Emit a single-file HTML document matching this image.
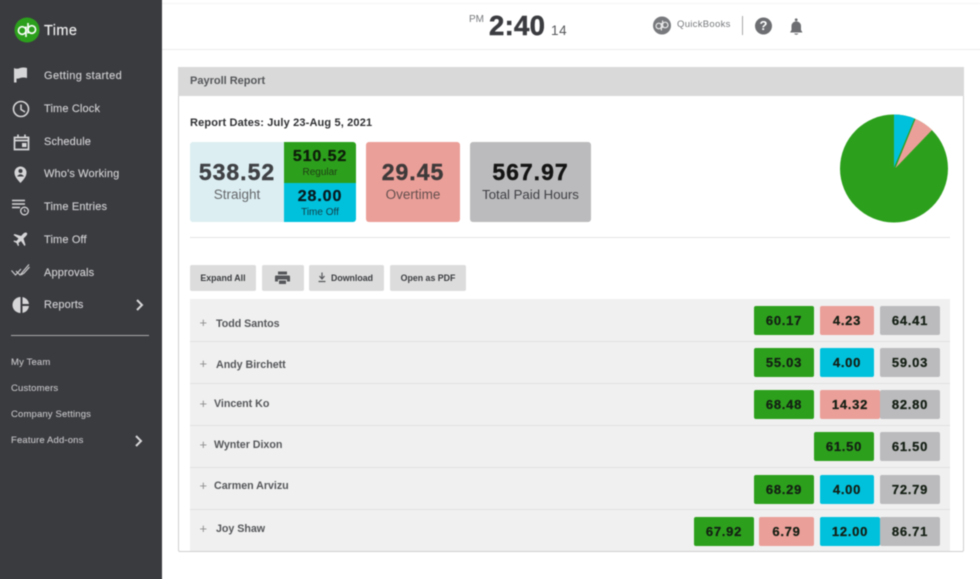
<!DOCTYPE html>
<html><head><meta charset="utf-8"><style>
html,body{margin:0;padding:0;background:#fff}
#o{position:relative;width:980px;height:579px;overflow:hidden;background:#fff}
#r{position:relative;width:980px;height:579px;background:#fff;font-family:"Liberation Sans",sans-serif;filter:blur(.45px)}
#r div{position:absolute;white-space:nowrap}
.sb{left:-6px;top:-6px;width:168px;height:591px;background:#3a3b3f}
.n{left:44px;font-size:11px;color:#cfcfd1;letter-spacing:.15px;line-height:14px;-webkit-text-stroke:.15px #cfcfd1}
.m{left:11px;font-size:9.5px;color:#c4c4c6;letter-spacing:.15px;line-height:12px;-webkit-text-stroke:.1px #c4c4c6}
.b{height:29px;line-height:29px;text-align:center;font-size:13px;font-weight:bold;border-radius:2px;color:#141f14;letter-spacing:.75px;-webkit-text-stroke:.25px #141f14}
.g{background:#2ca01c}.p{background:#eb9f99}.c{background:#00c1dc}.y{background:#bbbbbd}
.row{left:190px;width:760px;background:#f0f0f0;border-bottom:1px solid #e0e0e0;box-sizing:border-box}
.nm{font-size:10.7px;font-weight:bold;color:#55575a;letter-spacing:-.03px;line-height:14px}
.pl{font-size:13px;color:#8f8f8f;line-height:14px;left:199.5px}
.btn{top:265px;height:26px;line-height:26px;background:#dcdcdc;border-radius:2px;text-align:center;font-size:8.8px;font-weight:bold;color:#3b3d40}
.big{font-size:23px;font-weight:bold;line-height:27px;letter-spacing:1px;text-align:center}
</style></head><body><div id="o"><div id="r">
<div class="sb"></div>
<svg style="position:absolute;left:0;top:0" width="162" height="330" fill="none">
<circle cx="27" cy="30" r="12.5" fill="#2ca01c"/>
<circle cx="22.2" cy="30.500" r="3.800" stroke="#fff" stroke-width="1.600"/><path d="M26 26.500V37" stroke="#fff" stroke-width="1.600"/>
<circle cx="31.800" cy="29.500" r="3.800" stroke="#fff" stroke-width="1.600"/><path d="M28 23V33.500" stroke="#fff" stroke-width="1.600"/>
<path d="M14 68Q17 69.500 20 68Q23.500 67 27 68V78Q23.500 77 20 78Q18 79 16.500 78.500V82.500H14Z" fill="#d6d6d8"/>
<circle cx="21" cy="109" r="7.500" stroke="#d6d6d8" stroke-width="1.600"/><path d="M21 104.500V109.500L25 112" stroke="#d6d6d8" stroke-width="1.500"/>
<path d="M14.500 137.500H28.500V149.500H14.500ZM14.500 140.500H28.500" stroke="#d6d6d8" stroke-width="1.700"/><path d="M18 134.500V138M25 134.500V138" stroke="#d6d6d8" stroke-width="1.600"/><rect x="22" y="143" width="4.500" height="4" fill="#d6d6d8"/>
<path d="M20.500 183C17 179 14.500 176.500 14.500 172.500A6 6 0 0 1 26.500 172.500C26.500 176.500 24 179 20.500 183Z" fill="#d6d6d8"/><circle cx="20.500" cy="171" r="2" fill="#3a3b3f"/><path d="M17 176.500Q20.500 172 24 176.500Z" fill="#3a3b3f"/>
<path d="M12 200.500H25M12 204H25M12 207.500H20" stroke="#d6d6d8" stroke-width="1.500"/><circle cx="24.500" cy="211" r="3.800" stroke="#d6d6d8" stroke-width="1.300"/><path d="M24.500 209V211.200H26" stroke="#d6d6d8" stroke-width=".8"/>
<path d="M27 233C26 232 24.500 232.500 23.500 233.500L21 236L14.500 234L13.500 235L18.500 238.500L16.500 241L14 240.500L13.500 241.500L16.500 243L18 246L19 245.500L18.500 243L21 241L24.500 246L25.500 245L23.500 238.500L26 236C27 235 27.500 234 27 233Z" fill="#d6d6d8"/>
<path d="M11.500 270.500L15.500 275L21 269M16 271L20 275L29 264.500M21 275L24 273L29.500 267" stroke="#c9c9cb" stroke-width="1.200"/>
<path d="M20.500 297A8 8 0 1 0 20.500 313Z" fill="#d6d6d8"/><path d="M22.500 297A8 8 0 0 1 29 304H22.500ZM22.500 306H29A8 8 0 0 1 22.500 313Z" fill="#d6d6d8"/>
<path d="M137 300L142 305L137 310" stroke="#d6d6d8" stroke-width="2"/>
</svg>
<div style="left:44px;top:22px;font-size:14.500px;color:#eee;letter-spacing:.4px;line-height:18px;-webkit-text-stroke:.15px #eee">Time</div>
<div class="n" style="top:69px;letter-spacing:.4px">Getting started</div>
<div class="n" style="top:102px">Time Clock</div>
<div class="n" style="top:135px">Schedule</div>
<div class="n" style="top:167px">Who's Working</div>
<div class="n" style="top:200px">Time Entries</div>
<div class="n" style="top:233px">Time Off</div>
<div class="n" style="top:266px">Approvals</div>
<div class="n" style="top:298px">Reports</div>
<div style="left:11px;top:335px;width:138px;height:1px;background:#a9a9ab"></div>
<div class="m" style="top:357px">My Team</div>
<div class="m" style="top:383px">Customers</div>
<div class="m" style="top:409px">Company Settings</div>
<div class="m" style="top:435px">Feature Add-ons</div>
<svg style="position:absolute;left:134px;top:434px" width="10" height="14" fill="none"><path d="M2 2L7 7L2 12" stroke="#d6d6d8" stroke-width="2"/></svg>

<div style="left:162px;top:3px;width:818px;height:1px;background:#f4f4f4"></div>
<div style="left:162px;top:49px;width:824px;height:1px;background:#ececec"></div>
<div style="left:469px;top:14px;font-size:10px;color:#77797c;line-height:12px">PM</div>
<div style="left:489px;top:11px;font-size:27.500px;font-weight:bold;color:#3b3c40;line-height:30px;letter-spacing:.3px;-webkit-text-stroke:.5px #3b3c40">2:40</div>
<div style="left:551px;top:23px;font-size:13.500px;color:#55575a;line-height:16px;letter-spacing:.6px">14</div>
<svg style="position:absolute;left:652px;top:16px" width="160" height="20" fill="none">
<circle cx="10" cy="9.500" r="9" fill="#77797c"/>
<circle cx="6.800" cy="10" r="2.800" stroke="#e8e8e8" stroke-width="1.200"/><path d="M9.400 7V14.500" stroke="#e8e8e8" stroke-width="1.200"/>
<circle cx="13.200" cy="9" r="2.800" stroke="#e8e8e8" stroke-width="1.200"/><path d="M10.600 4.500V12" stroke="#e8e8e8" stroke-width="1.200"/>
<rect x="90" y="-1" width="1" height="20" fill="#a8a8a8"/>
<circle cx="111.500" cy="10" r="8.500" fill="#6c6e71"/>
<path d="M138 16.500H150.500L149 14V9.500A4.800 4.800 0 0 0 139.500 9.500V14Z" fill="#6c6e71"/><circle cx="144.200" cy="3.800" r="1.400" fill="#6c6e71"/><path d="M142 17.500Q144.200 20 146.500 17.500Z" fill="#6c6e71"/>
</svg>
<div style="left:759px;top:18px;width:9px;text-align:center;font-size:13px;font-weight:bold;color:#fff;line-height:16px">?</div>
<div style="left:677px;top:18px;font-size:9.500px;color:#77797c;letter-spacing:.3px;line-height:13px">QuickBooks</div>

<div style="left:178px;top:67px;width:786px;height:485px;border:1px solid #cfcfcf;border-radius:2px;box-sizing:border-box"></div>
<div style="left:178px;top:67px;width:786px;height:29px;background:#d9d9d9"></div>
<div style="left:190px;top:74px;font-size:11px;font-weight:bold;color:#55575a;line-height:14px">Payroll Report</div>
<div style="left:190px;top:116px;font-size:11px;font-weight:bold;color:#2f3033;line-height:14px;letter-spacing:.15px">Report Dates: July 23-Aug 5, 2021</div>

<div style="left:190px;top:142px;width:94px;height:80px;background:#dceef2;border-radius:3px 0 0 3px"></div>
<div style="left:284px;top:142px;width:72px;height:41px;background:#2ca01c;border-radius:0 3px 0 0"></div>
<div style="left:284px;top:183px;width:72px;height:39px;background:#00c1dc;border-radius:0 0 3px 0"></div>
<div class="big" style="left:190px;top:159px;width:94px;color:#3f4145;-webkit-text-stroke:.4px #3f4145">538.52</div>
<div style="left:190px;top:187px;width:94px;text-align:center;font-size:13.500px;color:#66686b;line-height:16px">Straight</div>
<div style="left:284px;top:147px;width:72px;text-align:center;font-size:16px;font-weight:bold;color:#0e1d0a;line-height:19px;letter-spacing:.9px;-webkit-text-stroke:.3px #0e1d0a">510.52</div>
<div style="left:284px;top:167px;width:72px;text-align:center;font-size:10px;color:#1f3d16;line-height:12px">Regular</div>
<div style="left:284px;top:187px;width:72px;text-align:center;font-size:16px;font-weight:bold;color:#071c22;line-height:19px;letter-spacing:.9px;-webkit-text-stroke:.3px #071c22">28.00</div>
<div style="left:284px;top:206.500px;width:72px;text-align:center;font-size:10px;color:#123d48;line-height:12px">Time Off</div>

<div style="left:366px;top:142px;width:94px;height:80px;background:#eb9f99;border-radius:3px"></div>
<div class="big" style="left:366px;top:159px;width:94px;color:#3f3a3a;-webkit-text-stroke:.4px #3f3a3a">29.45</div>
<div style="left:366px;top:187px;width:94px;text-align:center;font-size:13.500px;color:#65504e;line-height:16px">Overtime</div>
<div style="left:470px;top:142px;width:121px;height:80px;background:#bbbbbd;border-radius:3px"></div>
<div class="big" style="left:470px;top:159px;width:121px;color:#141414;-webkit-text-stroke:.4px #141414">567.97</div>
<div style="left:470px;top:187px;width:121px;text-align:center;font-size:13.200px;color:#3f4044;line-height:16px">Total Paid Hours</div>

<svg style="position:absolute;left:834px;top:108px" width="120" height="120">
<circle cx="60" cy="60.500" r="54" fill="#2ca01c"/>
<path d="M60 59.500V6.500A54 54 0 0 1 80.500 10.500Z" fill="#00c1dc"/>
<path d="M61.500 60L81.500 11A54 54 0 0 1 98 22Z" fill="#eb9f99"/>
</svg>

<div style="left:190px;top:237px;width:760px;height:1px;background:#e4e4e4"></div>

<div class="btn" style="left:190px;width:66px">Expand All</div>
<div class="btn" style="left:262px;width:42px"></div>
<svg style="position:absolute;left:275px;top:271px" width="16" height="14"><path d="M3 0.500H12V3.500H3ZM1 4.500H14Q15 4.500 15 5.500V10.500H12V8.500H3V10.500H0V5.500Q0 4.500 1 4.500ZM4 9.500H11V13H4Z" fill="#55575a"/></svg>
<div class="btn" style="left:309px;width:75px;padding-left:11px;box-sizing:border-box">Download</div>
<svg style="position:absolute;left:317px;top:272px" width="10" height="12"><path d="M5 0.500V6M2.500 4L5 7L7.500 4M1.500 9.500H8.500" stroke="#55575a" stroke-width="1.200" fill="none"/></svg>
<div class="btn" style="left:390px;width:76px">Open as PDF</div>

<div class="row" style="top:299px;height:43px"></div>
<div class="row" style="top:342px;height:42px"></div>
<div class="row" style="top:384px;height:42px"></div>
<div class="row" style="top:426px;height:42px"></div>
<div class="row" style="top:468px;height:42px"></div>
<div class="row" style="top:510px;height:41px;border-bottom:0"></div>

<div class="pl" style="top:316px">+</div><div class="nm" style="left:216px;top:317px">Todd Santos</div>
<div class="pl" style="top:357px">+</div><div class="nm" style="left:216px;top:358px">Andy Birchett</div>
<div class="pl" style="top:397px">+</div><div class="nm" style="left:214px;top:397px">Vincent Ko</div>
<div class="pl" style="top:438px">+</div><div class="nm" style="left:214px;top:438px">Wynter Dixon</div>
<div class="pl" style="top:479px">+</div><div class="nm" style="left:214px;top:479px">Carmen Arvizu</div>
<div class="pl" style="top:522px">+</div><div class="nm" style="left:216px;top:522px">Joy Shaw</div>

<div class="b g" style="left:754px;top:306px;width:60px">60.17</div><div class="b p" style="left:820px;top:306px;width:54px">4.23</div><div class="b y" style="left:880px;top:306px;width:60px">64.41</div>
<div class="b g" style="left:754px;top:348px;width:60px">55.03</div><div class="b c" style="left:820px;top:348px;width:54px">4.00</div><div class="b y" style="left:880px;top:348px;width:60px">59.03</div>
<div class="b g" style="left:754px;top:390px;width:60px">68.48</div><div class="b p" style="left:820px;top:390px;width:60px">14.32</div><div class="b y" style="left:880px;top:390px;width:60px">82.80</div>
<div class="b g" style="left:814px;top:432px;width:60px">61.50</div><div class="b y" style="left:880px;top:432px;width:60px">61.50</div>
<div class="b g" style="left:754px;top:475px;width:60px">68.29</div><div class="b c" style="left:820px;top:475px;width:54px">4.00</div><div class="b y" style="left:880px;top:475px;width:60px">72.79</div>
<div class="b g" style="left:694px;top:517px;width:60px">67.92</div><div class="b p" style="left:759px;top:517px;width:55px">6.79</div><div class="b c" style="left:820px;top:517px;width:60px">12.00</div><div class="b y" style="left:880px;top:517px;width:60px">86.71</div>
</div></div></body></html>
